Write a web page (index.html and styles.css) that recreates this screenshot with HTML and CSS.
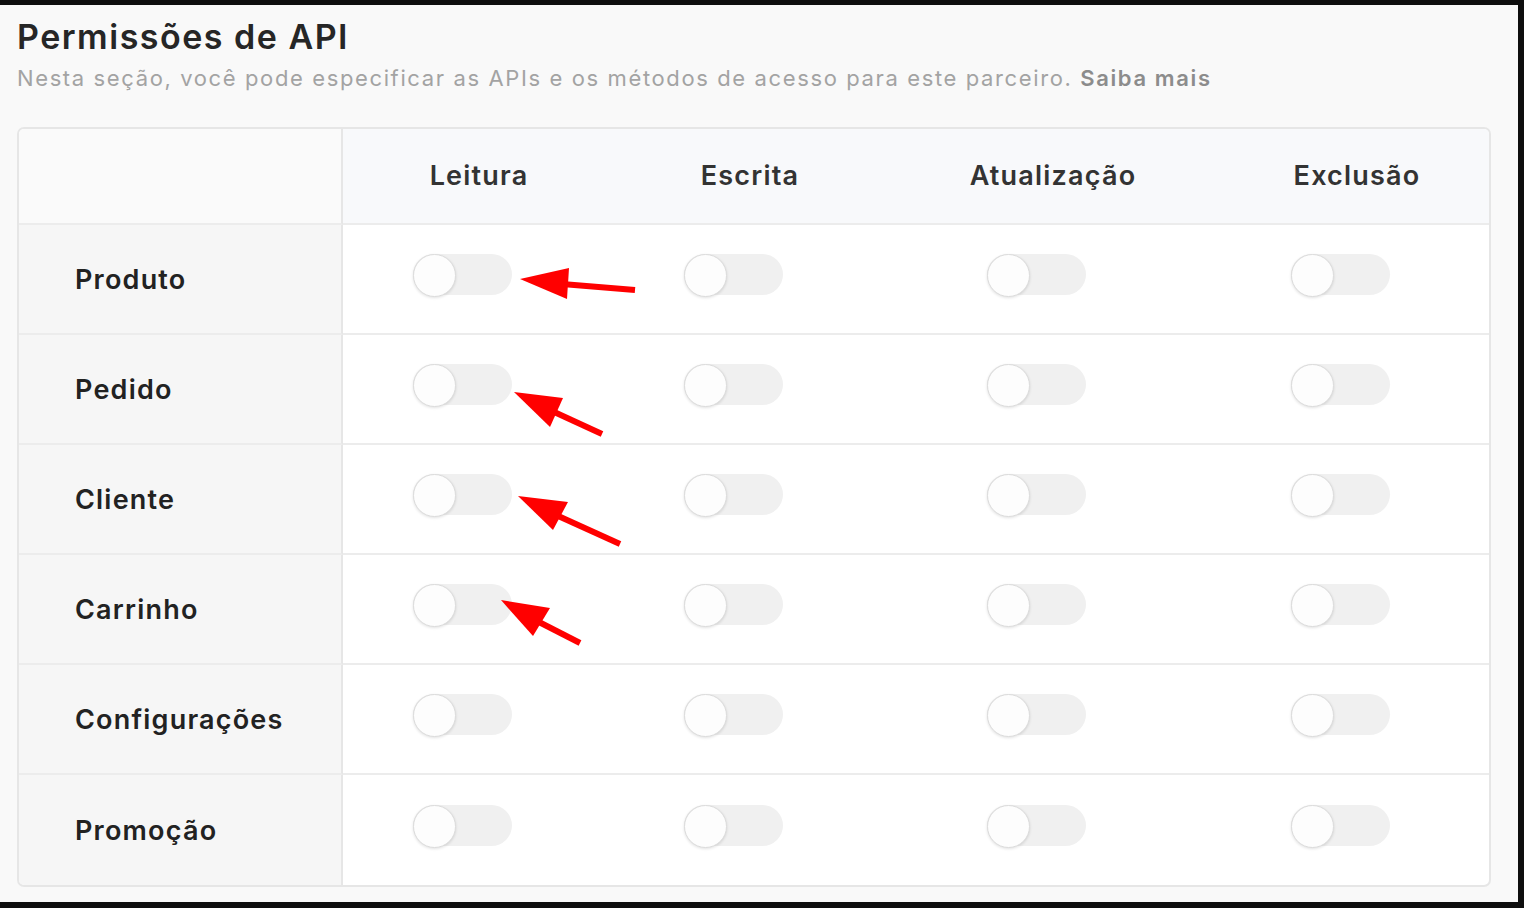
FILE: index.html
```html
<!DOCTYPE html>
<html lang="pt-BR">
<head>
<meta charset="utf-8">
<title>Permissões de API</title>
<link rel="stylesheet" href="styles.css">
</head>
<body>
<div class="frame">
  <h1 class="title">Permissões de API</h1>
  <p class="subtitle">Nesta seção, você pode especificar as APIs e os métodos de acesso para este parceiro. <b>Saiba mais</b></p>

  <div class="perm-table">
    <div class="cell head-corner"></div>
    <div class="cell head">Leitura</div>
    <div class="cell head">Escrita</div>
    <div class="cell head">Atualização</div>
    <div class="cell head">Exclusão</div>

    <div class="cell label">Produto</div>
    <div class="cell sw"><span class="toggle"></span></div>
    <div class="cell sw"><span class="toggle"></span></div>
    <div class="cell sw"><span class="toggle"></span></div>
    <div class="cell sw"><span class="toggle"></span></div>

    <div class="cell label">Pedido</div>
    <div class="cell sw"><span class="toggle"></span></div>
    <div class="cell sw"><span class="toggle"></span></div>
    <div class="cell sw"><span class="toggle"></span></div>
    <div class="cell sw"><span class="toggle"></span></div>

    <div class="cell label">Cliente</div>
    <div class="cell sw"><span class="toggle"></span></div>
    <div class="cell sw"><span class="toggle"></span></div>
    <div class="cell sw"><span class="toggle"></span></div>
    <div class="cell sw"><span class="toggle"></span></div>

    <div class="cell label">Carrinho</div>
    <div class="cell sw"><span class="toggle"></span></div>
    <div class="cell sw"><span class="toggle"></span></div>
    <div class="cell sw"><span class="toggle"></span></div>
    <div class="cell sw"><span class="toggle"></span></div>

    <div class="cell label">Configurações</div>
    <div class="cell sw"><span class="toggle"></span></div>
    <div class="cell sw"><span class="toggle"></span></div>
    <div class="cell sw"><span class="toggle"></span></div>
    <div class="cell sw"><span class="toggle"></span></div>

    <div class="cell label last">Promoção</div>
    <div class="cell sw last"><span class="toggle"></span></div>
    <div class="cell sw last"><span class="toggle"></span></div>
    <div class="cell sw last"><span class="toggle"></span></div>
    <div class="cell sw last"><span class="toggle"></span></div>
  </div>
</div>

<svg class="annotations" width="1524" height="908" viewBox="0 0 1524 908" xmlns="http://www.w3.org/2000/svg">
  <g fill="#ff0000" stroke="#ff0000">
    <line x1="562" y1="284" x2="635" y2="290" stroke-width="6"/>
    <polygon points="520,279 569,268 567,299" stroke="none"/>

    <line x1="552" y1="411" x2="602" y2="434" stroke-width="6"/>
    <polygon points="514,392 563,398 550,427" stroke="none"/>

    <line x1="556" y1="515" x2="620" y2="544" stroke-width="6"/>
    <polygon points="518,496 568,502 553,530" stroke="none"/>

    <line x1="537" y1="621" x2="580" y2="643" stroke-width="6"/>
    <polygon points="501,600 550,608 533,636" stroke="none"/>
  </g>
</svg>
</body>
</html>
```

FILE: styles.css
```css
* { box-sizing: border-box; }

html, body {
  margin: 0;
  padding: 0;
}

body {
  background: #0e0e0e;
  width: 1524px;
  height: 908px;
  overflow: hidden;
  position: relative;
  font-family: "Inter", "Liberation Sans", sans-serif;
}

.frame {
  margin: 5px 6px 0 0;
  height: 897px;
  background: #f9f9f9;
  padding: 12px 0 0 17px;
}

.title {
  margin: 0;
  font-size: 34px;
  line-height: 40px;
  font-weight: 600;
  color: #262626;
  letter-spacing: 1.5px;
}

.subtitle {
  margin: 7px 0 0 0;
  font-size: 22px;
  line-height: 28px;
  color: #a3a3a3;
  font-weight: 400;
  letter-spacing: 1.62px;
}

.subtitle b {
  font-weight: 600;
  color: #8c8c8c;
}

.perm-table {
  margin-top: 35px;
  width: 1474px;
  display: grid;
  grid-template-columns: 324px 272px 270px 336px 272px;
  grid-template-rows: 96px repeat(6, 110px);
  border: 2px solid #e6e6e6;
  border-radius: 7px;
  overflow: hidden;
  background: #ffffff;
}

.cell {
  display: flex;
  align-items: center;
  border-bottom: 2px solid #ececec;
}

.cell.last {
  border-bottom: none;
}

.head-corner {
  background: #fafafa;
  border-right: 2px solid #e6e6e6;
}

.head {
  background: #f8f9fb;
  justify-content: center;
  font-size: 27px;
  font-weight: 600;
  color: #333333;
  letter-spacing: 1.2px;
  padding-bottom: 2px;
}

.label {
  background: #f6f6f6;
  border-right: 2px solid #e6e6e6;
  padding-left: 56px;
  font-size: 27px;
  font-weight: 600;
  color: #222222;
  letter-spacing: 1.2px;
}

.sw {
  justify-content: center;
  padding-right: 34px;
  padding-bottom: 10px;
}

.toggle {
  position: relative;
  display: block;
  width: 99px;
  height: 41px;
  border-radius: 21px;
  background: #f0f0f0;
}

.toggle::before {
  content: "";
  position: absolute;
  left: 0;
  top: 0;
  width: 41px;
  height: 41px;
  border-radius: 50%;
  background: #fdfdfd;
  border: 1.5px solid #dcdcdc;
  box-shadow: 0 1px 3px rgba(0, 0, 0, 0.12);
}

.annotations {
  position: absolute;
  left: 0;
  top: 0;
  pointer-events: none;
}
```
